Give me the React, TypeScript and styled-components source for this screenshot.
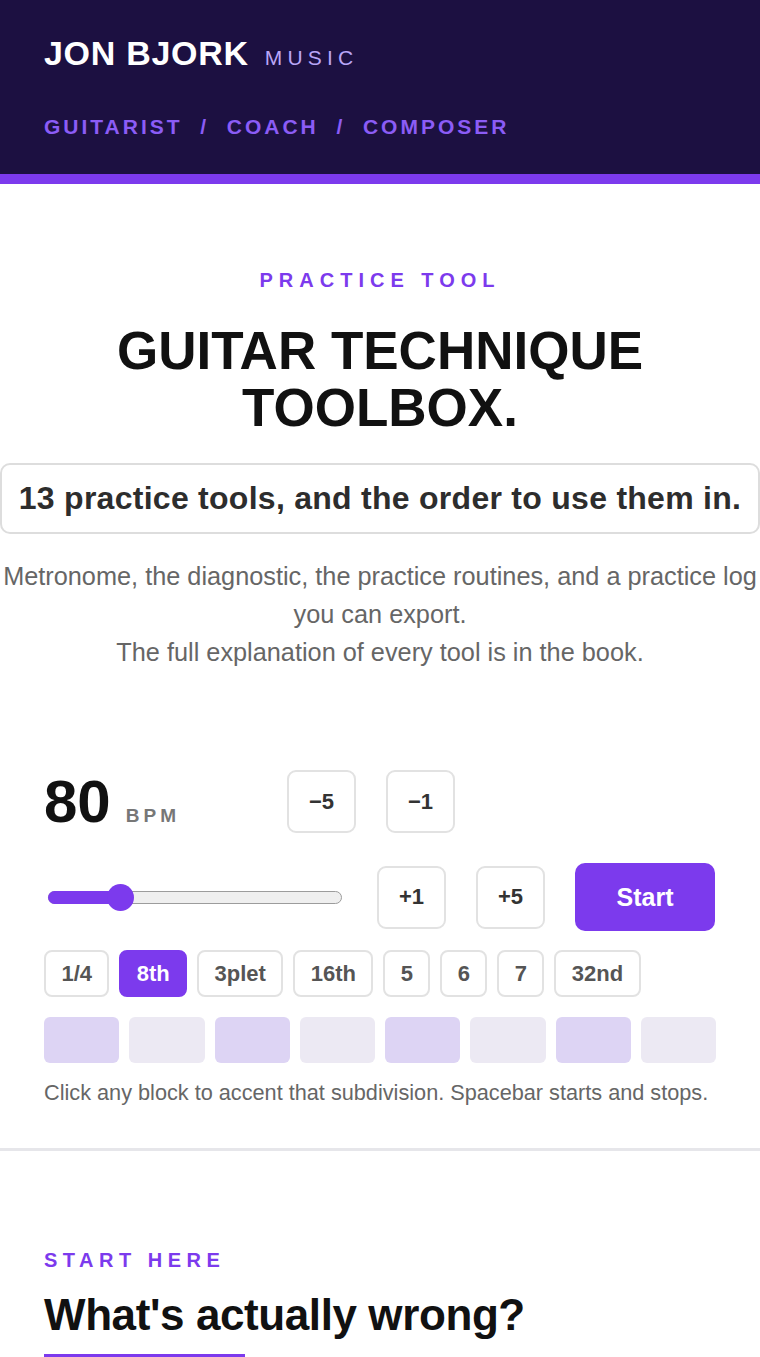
import React, { useState } from "react";
import styled, { createGlobalStyle } from "styled-components";

const Global = createGlobalStyle`
  * { box-sizing: border-box; }
  html, body { margin: 0; padding: 0; background: #ffffff; }
  body { font-family: "Liberation Sans", Arial, Helvetica, sans-serif; color: #111; }
  button { font-family: inherit; }
`;

const Header = styled.header`
  background: #1c1041;
  padding: 34px 44px 35px;
  border-bottom: 10px solid #7c3aed;
`;

const LogoRow = styled.div`
  display: flex;
  align-items: baseline;
`;

const Brand = styled.span`
  font-size: 34px;
  font-weight: 700;
  letter-spacing: 0.7px;
  color: #ffffff;
  line-height: 39px;
`;

const BrandSub = styled.span`
  margin-left: 16px;
  font-size: 21px;
  font-weight: 400;
  letter-spacing: 5.2px;
  color: #b9a6f7;
`;

const Tagline = styled.div`
  margin-top: 42px;
  font-size: 21px;
  font-weight: 700;
  letter-spacing: 3px;
  line-height: 24px;
  color: #8b5cf6;
  white-space: pre;
`;

const Hero = styled.section`
  padding: 85px 0 0;
  text-align: center;
`;

const Eyebrow = styled.p<{ $spacing: number }>`
  margin: 0;
  font-size: 20px;
  font-weight: 700;
  line-height: 23px;
  letter-spacing: ${(p) => p.$spacing}px;
  color: #7c3aed;
`;

const Title = styled.h1`
  margin: 30px 0 0;
  font-size: 53px;
  line-height: 57px;
  font-weight: 700;
  color: #111;
`;

const Pitch = styled.div`
  margin: 27px 0 0;
  border: 2px solid #dddddd;
  border-radius: 10px;
  padding: 15px 0;
  font-size: 32px;
  line-height: 37px;
  letter-spacing: 0.27px;
  font-weight: 700;
  color: #2d2d2d;
`;

const Lead = styled.p`
  margin: 23px 0 0;
  font-size: 25.3px;
  line-height: 38px;
  color: #666666;
`;

const Metronome = styled.section`
  padding: 99px 44px 43px;
  border-bottom: 3px solid #e6e6ea;
`;

const Controls = styled.div`
  display: flex;
  flex-direction: column;
  gap: 30px;
`;

const ControlRow = styled.div`
  display: flex;
  align-items: center;
  gap: 30px;
`;

const Readout = styled.div`
  width: 213px;
  display: flex;
  align-items: baseline;
  gap: 15px;
`;

const Bpm = styled.span`
  font-size: 60px;
  line-height: 60px;
  font-weight: 700;
  color: #111;
`;

const BpmUnit = styled.span`
  font-size: 19px;
  font-weight: 700;
  letter-spacing: 4px;
  color: #777777;
`;

const StepButton = styled.button`
  width: 69px;
  height: 63px;
  padding: 0;
  border: 2px solid #e2e2e2;
  border-radius: 9px;
  background: #ffffff;
  font-size: 22px;
  font-weight: 700;
  color: #333333;
  cursor: pointer;
`;

const StartButton = styled.button`
  width: 140px;
  height: 68px;
  padding: 0;
  border: none;
  border-radius: 10px;
  background: #7c3aed;
  color: #ffffff;
  font-size: 25px;
  font-weight: 700;
  cursor: pointer;
`;

const SliderWrap = styled.div`
  width: 303px;
  padding: 0 5px 0 4px;
  height: 28px;
  display: flex;
  align-items: center;
`;

const Track = styled.div`
  position: relative;
  flex: 1;
  height: 13px;
  border: 1px solid #9c9c9c;
  border-radius: 7px;
  background: #efefef;
`;

const Fill = styled.div`
  position: absolute;
  left: -1px;
  top: -1px;
  bottom: -1px;
  border-radius: 7px;
  background: #7c3aed;
`;

const Thumb = styled.div`
  position: absolute;
  top: 50%;
  width: 27px;
  height: 27px;
  margin: -13.5px 0 0 -13.5px;
  border-radius: 50%;
  background: #7c3aed;
`;

const Subdivisions = styled.div`
  margin-top: 19px;
  display: flex;
  gap: 10px;
`;

const SubButton = styled.button<{ $active: boolean }>`
  height: 47px;
  padding: 0 15.4px;
  border: 2px solid ${(p) => (p.$active ? "#7c3aed" : "#e2e2e2")};
  border-radius: 8px;
  background: ${(p) => (p.$active ? "#7c3aed" : "#ffffff")};
  color: ${(p) => (p.$active ? "#ffffff" : "#555555")};
  font-size: 22px;
  font-weight: 700;
  cursor: pointer;
`;

const Blocks = styled.div`
  margin-top: 20px;
  display: grid;
  grid-template-columns: repeat(8, 1fr);
  gap: 10px;
`;

const Block = styled.div<{ $accent: boolean }>`
  height: 46px;
  border-radius: 6px;
  background: ${(p) => (p.$accent ? "#ddd4f4" : "#ece9f3")};
  cursor: pointer;
`;

const Hint = styled.p`
  margin: 17px 0 0;
  font-size: 21.7px;
  line-height: 25px;
  color: #666666;
`;

const StartHere = styled.section`
  padding: 98px 44px 0;
`;

const SectionTitle = styled.h2`
  margin: 16px 0 0;
  font-size: 44px;
  line-height: 53px;
  letter-spacing: -0.4px;
  font-weight: 700;
  color: #111;
`;

const Rule = styled.div`
  margin-top: 13px;
  width: 201px;
  height: 6px;
  background: #7c3aed;
`;

const SUBS = ["1/4", "8th", "3plet", "16th", "5", "6", "7", "32nd"];
const MIN = 30;
const MAX = 260;

export default function App() {
  const [bpm, setBpm] = useState(80);
  const [sub, setSub] = useState("8th");
  const [accents, setAccents] = useState<boolean[]>([true, false, true, false, true, false, true, false]);

  const frac = (bpm - MIN) / (MAX - MIN);
  const thumbPos = `calc(13.5px + (100% - 27px) * ${frac})`;
  const change = (d: number) => setBpm((b) => Math.min(MAX, Math.max(MIN, b + d)));

  return (
    <>
      <Global />
      <Header>
        <LogoRow>
          <Brand>JON BJORK</Brand>
          <BrandSub>MUSIC</BrandSub>
        </LogoRow>
        <Tagline>{"GUITARIST\u00a0\u00a0/\u00a0\u00a0COACH\u00a0\u00a0/\u00a0\u00a0COMPOSER"}</Tagline>
      </Header>

      <Hero>
        <Eyebrow $spacing={6}>PRACTICE TOOL</Eyebrow>
        <Title>
          GUITAR TECHNIQUE
          <br />
          TOOLBOX.
        </Title>
        <Pitch>13 practice tools, and the order to use them in.</Pitch>
        <Lead>
          Metronome, the diagnostic, the practice routines, and a practice log you can export.
          <br />
          The full explanation of every tool is in the book.
        </Lead>
      </Hero>

      <Metronome>
        <Controls>
          <ControlRow>
            <Readout>
              <Bpm>{bpm}</Bpm>
              <BpmUnit>BPM</BpmUnit>
            </Readout>
            <StepButton onClick={() => change(-5)}>−5</StepButton>
            <StepButton onClick={() => change(-1)}>−1</StepButton>
          </ControlRow>
          <ControlRow>
            <SliderWrap>
              <Track>
                <Fill style={{ width: `calc(${thumbPos} + 1px)` }} />
                <Thumb style={{ left: thumbPos }} />
              </Track>
            </SliderWrap>
            <StepButton onClick={() => change(1)}>+1</StepButton>
            <StepButton onClick={() => change(5)}>+5</StepButton>
            <StartButton>Start</StartButton>
          </ControlRow>
        </Controls>
        <Subdivisions>
          {SUBS.map((s) => (
            <SubButton key={s} $active={s === sub} onClick={() => setSub(s)}>
              {s}
            </SubButton>
          ))}
        </Subdivisions>
        <Blocks>
          {accents.map((a, i) => (
            <Block
              key={i}
              $accent={a}
              onClick={() => setAccents((arr) => arr.map((v, j) => (j === i ? !v : v)))}
            />
          ))}
        </Blocks>
        <Hint>Click any block to accent that subdivision. Spacebar starts and stops.</Hint>
      </Metronome>

      <StartHere>
        <Eyebrow $spacing={5.5}>START HERE</Eyebrow>
        <SectionTitle>What's actually wrong?</SectionTitle>
        <Rule />
      </StartHere>
    </>
  );
}
